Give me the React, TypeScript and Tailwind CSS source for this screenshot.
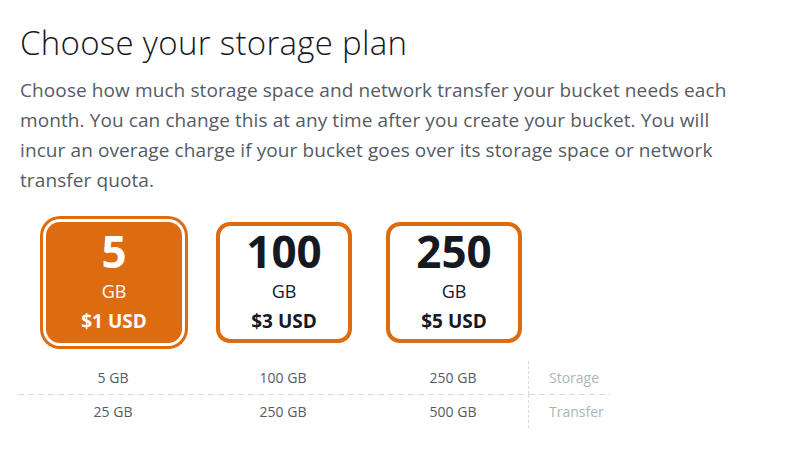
const plans = [
  { size: "5", price: "$1 USD", storage: "5 GB", transfer: "25 GB", selected: true },
  { size: "100", price: "$3 USD", storage: "100 GB", transfer: "250 GB", selected: false },
  { size: "250", price: "$5 USD", storage: "250 GB", transfer: "500 GB", selected: false },
]

const rows = [
  { key: "storage", label: "Storage" },
  { key: "transfer", label: "Transfer" },
]

export default function App() {
  return (
    <div className="w-[796px] h-[457px] bg-white font-['Open_Sans',sans-serif] text-[#16191f]">
      <div className="pl-[20px] pt-[23px]">
        <h1 className="text-[33px] leading-[40px] font-light tracking-[0.3px] text-[#16191f]">Choose your storage plan</h1>
        <p className="mt-[12px] w-[730px] text-[19px] leading-[30px] tracking-[0.1px] text-[#545b64]">
          Choose how much storage space and network transfer your bucket needs each month. You can change this at any time after you create your bucket. You will incur an overage charge if your bucket goes over its storage space or network transfer quota.
        </p>
      </div>

      <div className="flex gap-[34px] pl-[46px] mt-[27px]">
        {plans.map((plan) => (
          <button
            key={plan.size}
            className={`w-[136px] h-[121px] rounded-[14px] flex flex-col items-center ${
              plan.selected
                ? "pt-[5px] bg-[#dd6b10] text-white ring-3 ring-[#dd6b10] ring-offset-3 ring-offset-white"
                : "pt-[1px] bg-white border-4 border-[#dd6b10] text-[#16191f]"
            }`}
          >
            <span className="text-[44px] leading-[48px] font-bold">{plan.size}</span>
            <span className="mt-[4px] text-[18px] leading-[24px]">GB</span>
            <span className="mt-[6px] text-[19px] leading-[24px] font-bold">{plan.price}</span>
          </button>
        ))}
      </div>

      <div className="mt-[18px] ml-[18px] w-[592px] text-[14px] text-[#545b64]">
        {rows.map((row, i) => (
          <div key={row.key}>
            {i === 1 && (
              <div className="flex h-px">
                <div className="w-[510px] bg-[repeating-linear-gradient(to_right,#d5dbdb_0_6px,transparent_6px_10px)]" />
                <div className="w-px bg-[#d5dbdb]" />
                <div className="flex-1 bg-[repeating-linear-gradient(to_right,#d5dbdb_0_6px,transparent_6px_10px)]" />
              </div>
            )}
            <div className="flex h-[33px] items-stretch">
              <div className="w-[10px]" />
              {plans.map((plan, j) => (
                <div
                  key={plan.size}
                  className={`flex items-center justify-center ${j === 2 ? "w-[160px] pl-[10px]" : "w-[170px]"}`}
                >
                  {row.key === "storage" ? plan.storage : plan.transfer}
                </div>
              ))}
              <div className="flex-1 flex items-center pl-[20px] border-l border-dashed border-[#d5dbdb] text-[#aab7b8]">
                {row.label}
              </div>
            </div>
          </div>
        ))}
      </div>
    </div>
  )
}
